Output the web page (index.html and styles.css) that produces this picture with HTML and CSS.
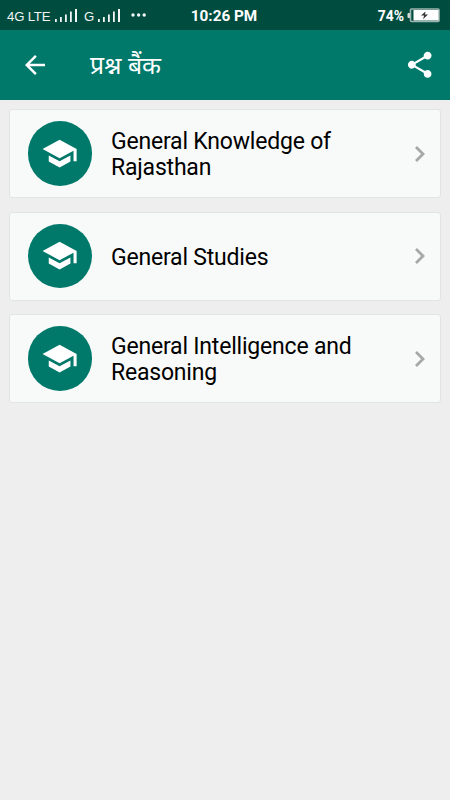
FILE: index.html
```html
<!DOCTYPE html>
<html lang="hi">
<head>
<meta charset="utf-8">
<meta name="viewport" content="width=device-width, initial-scale=1">
<title>प्रश्न बैंक</title>
<link rel="stylesheet" href="styles.css">
</head>
<body>
<svg width="0" height="0" class="symbols" aria-hidden="true">
  <symbol id="school" viewBox="0 0 24 24"><path d="M5 13.18v4L12 21l7-3.82v-4L12 17l-7-3.82zM12 3L1 9l11 6 9-4.91V17h2V9L12 3z"/></symbol>
  <symbol id="chevron" viewBox="0 0 12 18"><path d="M2 2l7 7-7 7" fill="none" stroke="currentColor" stroke-width="2.8"/></symbol>
  <symbol id="signal" viewBox="0 0 23 14"><path d="M0 10h1.8v3H0zM5 8h1.8v5H5zM10 5.5h1.8V13H10zM15 2.5h1.8V13H15zM20 0h2v13h-2z"/></symbol>
</svg>
<header class="status">
  <div class="network">
    <span class="net-lte">4G LTE</span>
    <svg class="signal signal-lte"><use href="#signal"/></svg>
    <span class="net-g">G</span>
    <svg class="signal"><use href="#signal"/></svg>
    <svg class="dots" viewBox="0 0 16 4"><circle cx="2" cy="2" r="1.7"/><circle cx="7.6" cy="2" r="1.7"/><circle cx="13.2" cy="2" r="1.7"/></svg>
  </div>
  <time class="clock">10:26 PM</time>
  <div class="power">
    <span class="percent">74%</span>
    <svg class="battery" viewBox="0 0 33 15">
      <path d="M3 5H1.5Q.5 5 .5 6v3q0 1 1 1H3z" fill="#d5e0dd"/>
      <rect x="3.5" y="1" width="28.5" height="12.5" rx="1" fill="none" stroke="#9fb5af" stroke-width="1.6"/>
      <rect x="6.5" y="2" width="25" height="10.5" fill="#fff"/>
      <path d="M18.5 3.5l-4.5 4h3.2l-1.2 3.8 5-4.8h-3z" fill="#333"/>
    </svg>
  </div>
</header>
<nav class="toolbar">
  <svg class="back" viewBox="0 0 24 24"><path d="M20 11H7.83l5.59-5.59L12 4l-8 8 8 8 1.41-1.41L7.83 13H20v-2z"/></svg>
  <h1 class="title">प्रश्न बैंक</h1>
  <svg class="share" viewBox="0 0 24 24"><path d="M18 16.08c-.76 0-1.44.3-1.96.77L8.91 12.7c.05-.23.09-.46.09-.7s-.04-.47-.09-.7l7.05-4.11c.54.5 1.25.81 2.04.81 1.66 0 3-1.34 3-3s-1.34-3-3-3-3 1.34-3 3c0 .24.04.47.09.7L8.04 9.81C7.5 9.31 6.79 9 6 9c-1.66 0-3 1.34-3 3s1.34 3 3 3c.79 0 1.5-.31 2.04-.81l7.12 4.16c-.05.21-.08.43-.08.65 0 1.61 1.31 2.92 2.92 2.92 1.61 0 2.92-1.31 2.92-2.92s-1.31-2.92-2.92-2.92z"/></svg>
</nav>
<main class="list">
  <article class="card">
    <span class="badge"><svg class="school"><use href="#school"/></svg></span>
    <h2 class="label">General Knowledge of Rajasthan</h2>
    <svg class="chevron"><use href="#chevron"/></svg>
  </article>
  <article class="card">
    <span class="badge"><svg class="school"><use href="#school"/></svg></span>
    <h2 class="label">General Studies</h2>
    <svg class="chevron"><use href="#chevron"/></svg>
  </article>
  <article class="card">
    <span class="badge"><svg class="school"><use href="#school"/></svg></span>
    <h2 class="label">General Intelligence and Reasoning</h2>
    <svg class="chevron"><use href="#chevron"/></svg>
  </article>
</main>
</body>
</html>
```
FILE: styles.css
```css
* { box-sizing: border-box; }
body {
  margin: 0;
  min-height: 100vh;
  background: #eee;
  color: #000;
  font-family: Roboto, "Noto Sans", sans-serif;
}
svg { display: block; flex: none; fill: currentColor; }
.symbols { display: none; }

.status {
  display: grid;
  grid-template-columns: 1fr auto 1fr;
  align-items: center;
  height: 30px;
  padding: 2px 10px 0 7px;
  background: #004d40;
  color: #fff;
}
.network { display: flex; align-items: center; font: 13.2px/16px "Liberation Sans", sans-serif; color: #f2f6f5; }
.net-lte { padding-top: 2px; letter-spacing: -.2px; width: 48px; white-space: nowrap; }
.net-g { width: 14px; padding-top: 2px; }
.signal { width: 23px; height: 14px; }
.signal-lte { margin-right: 6px; }
.dots { width: 16px; height: 4px; margin: 0 0 2px 10px; }
.clock { padding-left: 1px; font-size: 15.3px; font-weight: 700; line-height: 18px; }
.power { display: flex; align-items: center; justify-content: flex-end; gap: 3px; }
.percent { font-size: 13.9px; font-weight: 700; line-height: 18px; }
.battery { width: 33px; height: 15px; margin-bottom: 2px; }

.toolbar {
  display: flex;
  align-items: center;
  height: 70px;
  padding: 0 14.5px 0 20px;
  background: #00796b;
  color: #fff;
}
.back { width: 30px; height: 30px; }
.title { flex: 1; margin: 0 0 0 40px; font: 400 24.7px/36px "Noto Sans", "Noto Sans Devanagari", sans-serif; }
.share { width: 31.5px; height: 31.5px; }

.list { display: flex; flex-direction: column; gap: 13.5px; padding: 9px; }
.card {
  display: flex;
  align-items: center;
  height: 89px;
  padding: 0 14.5px 0 17.5px;
  border: 1px solid #e2e4e3;
  border-radius: 3px;
  background: #f8faf9;
}
.badge {
  display: grid;
  place-items: center;
  flex: none;
  width: 64.5px;
  height: 64.5px;
  border-radius: 50%;
  background: #00796b;
  color: #fff;
}
.school { width: 37.2px; height: 37.2px; }
.label { flex: 1; margin: 3px 50px 0 19px; font-size: 23px; font-weight: 400; line-height: 26px; letter-spacing: -.2px; }
.chevron { width: 12px; height: 18px; color: #a6a8a7; }
```
